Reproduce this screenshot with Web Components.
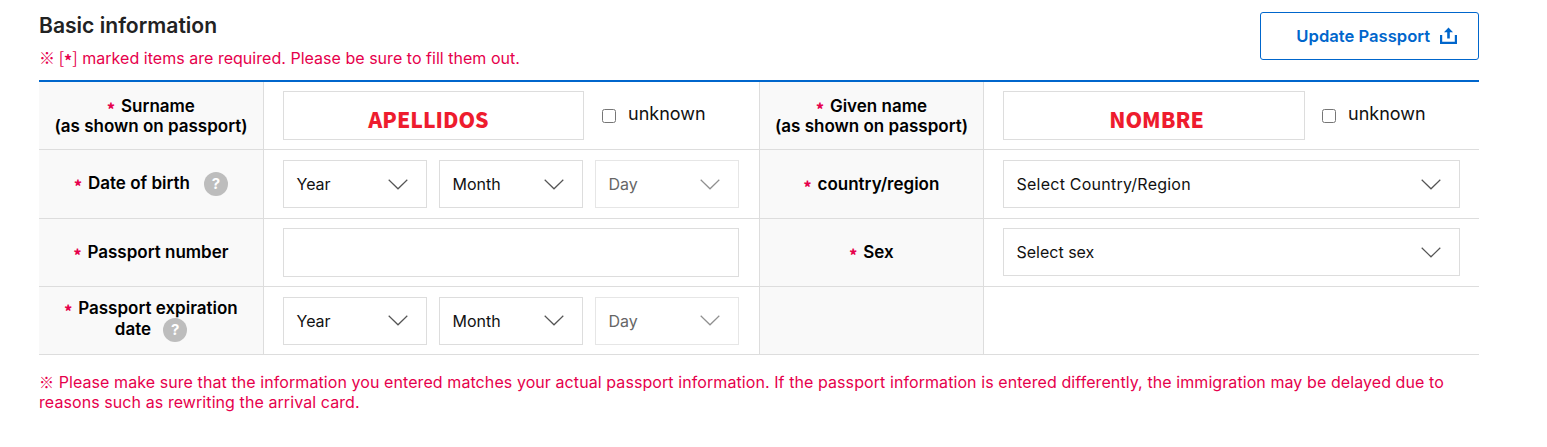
<!DOCTYPE html>
<html lang="en"><head><meta charset="utf-8"><title>Basic information</title>
<style>
html,body{margin:0;background:#fff;font-family:Inter,"Liberation Sans",sans-serif;color:#000}
.cjk{font-family:"Noto Sans CJK KR",sans-serif;line-height:0}
.star{position:relative;top:3px;font-weight:700}
</style></head><body>
<passport-form>
  <section-head slot="head" heading="Basic information">
    <span slot="note"><span class="cjk">※ [<span class="star">*</span>]</span> marked items are required. Please be sure to fill them out.</span>
    <update-button>Update Passport</update-button>
  </section-head>
  <form-grid>
    <form-label req>Surname<br>(as shown on passport)</form-label>
    <form-cell>
      <text-field width="301" mark="APELLIDOS" mark-shift="-10"></text-field>
      <check-item>unknown</check-item>
    </form-cell>
    <form-label req>Given name<br>(as shown on passport)</form-label>
    <form-cell last>
      <text-field width="302" mark="NOMBRE" mark-shift="5"></text-field>
      <check-item style="margin-left:17px">unknown</check-item>
    </form-cell>

    <form-label req>Date of birth<help-dot style="margin-left:14px"></help-dot></form-label>
    <form-cell gap="12">
      <select-box width="144">Year</select-box><select-box width="144">Month</select-box><select-box width="144" disabled>Day</select-box>
    </form-cell>
    <form-label req>country/region</form-label>
    <form-cell last><select-box width="457" style="letter-spacing:.24px">Select Country/Region</select-box></form-cell>

    <form-label req style="padding-bottom:2px">Passport number</form-label>
    <form-cell><text-field width="456"></text-field></form-cell>
    <form-label req style="padding-bottom:2px">Sex</form-label>
    <form-cell last style="padding-bottom:1px"><select-box width="457">Select sex</select-box></form-cell>

    <form-label req style="padding-bottom:2px">Passport expiration<br>date<help-dot style="margin-left:12px"></help-dot></form-label>
    <form-cell gap="12">
      <select-box width="144">Year</select-box><select-box width="144">Month</select-box><select-box width="144" disabled>Day</select-box>
    </form-cell>
    <form-label></form-label>
    <form-cell last></form-cell>
  </form-grid>
  <notice-text><span class="cjk" style="font-size:15px">※</span> Please make sure that the information you entered matches your actual passport information. If the passport information is entered differently, the immigration may be delayed due to<br>reasons such as rewriting the arrival card.</notice-text>
</passport-form>
<script>
function def(name, css, html, init){
  customElements.define(name, class extends HTMLElement{
    constructor(){super();const r=this.attachShadow({mode:'open'});r.innerHTML='<style>'+css+'</style>'+(typeof html==='function'?html(this):html);}
    connectedCallback(){ if(init) init(this,this.shadowRoot); }
  });
}
def('passport-form',
 ':host{display:block;box-sizing:border-box;width:1440px;margin-left:39px}',
 '<slot name="head"></slot><slot></slot>');

def('section-head',
 `:host{display:flex;justify-content:space-between;align-items:flex-start;height:80px;box-sizing:border-box;padding-top:12px}
  h2{margin:1px 0 0;font:600 21.1px/25px Inter,sans-serif;color:#222}
  p{margin:9px 0 0;font:400 16px/22px Inter,sans-serif;color:#e6004c;letter-spacing:.03px}
  .t{min-width:0}`,
 `<div class="t"><h2></h2><p><slot name="note"></slot></p></div><slot></slot>`,
 (h,r)=>{r.querySelector('h2').textContent=h.getAttribute('heading');});

def('update-button',
 `:host{display:flex;box-sizing:border-box;width:219px;height:48px;border:1px solid #0066cc;border-radius:3px;align-items:center;justify-content:flex-end;padding:0 21px 0 0;gap:9px;color:#0066cc;font:600 16.6px/20px Inter,sans-serif;cursor:pointer}
  svg{display:block;margin-top:-2px}`,
 `<slot></slot><svg width="18" height="17" viewBox="0 0 18 17" fill="none"><path d="M9.5.5 5 5.2h3.2v6.3h2.6V5.2H14z" fill="#0066cc"/><path d="M2.1 8v7.9h14.8V8" stroke="#0066cc" stroke-width="2.2" fill="none"/></svg>`);

def('form-grid',
 `:host{display:grid;grid-template-columns:225px 496px 224px 495px;grid-template-rows:68px 69px 68px 68px;border-top:2px solid #0066cc}`,
 '<slot></slot>');

def('form-label',
 `:host{display:block;box-sizing:border-box;background:#f9f9f9;border-right:1px solid #ddd;border-bottom:1px solid #ddd;font:600 17px/20px Inter,sans-serif;color:#000;text-align:center}
  .w{height:100%;display:flex;align-items:center;justify-content:center;padding:0 2px;box-sizing:border-box}
  .i{display:block}
  .s{color:#e6004c;font:900 15px/0 "Noto Sans CJK KR",sans-serif;margin-right:6px;position:relative;top:3px}`,
 h=>`<div class="w"><div class="i">${h.hasAttribute('req')?'<span class="s">*</span>':''}<slot></slot></div></div>`);

def('form-cell',
 `:host{display:flex;box-sizing:border-box;align-items:center;padding:0 0 0 19px;border-right:1px solid #ddd;border-bottom:1px solid #ddd}
  :host([last]){border-right:0}
  :host([gap]){gap:12px}`,
 '<slot></slot>');

def('text-field',
 `:host{display:flex;box-sizing:border-box;height:49px;border:1px solid #ddd;background:#fff;align-items:center;justify-content:center;flex:none}
  span{font:900 21.2px/1 "Noto Sans CJK KR",sans-serif;color:#ee1c2e;position:relative;top:3px}`,
 h=>{const m=h.getAttribute('mark');return m?`<span>${m}</span>`:'';},
 (h,r)=>{h.style.width=h.getAttribute('width')+'px';const s=r.querySelector('span');if(s)s.style.left=(+h.getAttribute('mark-shift')/2)+'px';});

def('check-item',
 `:host{display:flex;align-items:center;margin-left:18px;font:400 18px/22px Inter,sans-serif;color:#111}
  i{display:block;box-sizing:border-box;width:14px;height:14px;border:1px solid #767676;border-radius:2.5px;background:#fff;margin:0 12px 0 0}
  .l{position:relative;top:-2px}`,
 `<i></i><span class="l"><slot></slot></span>`);

def('select-box',
 `:host{display:flex;box-sizing:border-box;height:48px;border:1px solid #ddd;background:#fff;align-items:center;justify-content:space-between;padding:0 18px 0 12.5px;flex:none;font:400 16px/20px Inter,sans-serif;color:#111}
  :host([disabled]){color:#666;border-color:#e6e6e6}
  svg{display:block}
  :host([disabled]) svg{opacity:.65}`,
 `<slot></slot><svg width="20" height="11" viewBox="0 0 20 11" fill="none"><path d="M.7.8 10 9.8 19.3.8" stroke="#555" stroke-width="1.2"/></svg>`,
 h=>{h.style.width=h.getAttribute('width')+'px';});

def('help-dot',
 `:host{display:inline-flex;width:24px;height:24px;border-radius:50%;background:#bdbdbd;color:#fff;font:700 15px/24px Inter,sans-serif;align-items:center;justify-content:center;vertical-align:middle;margin-left:13px}`,
 '?');

def('notice-text',
 `:host{display:block;margin-top:17px;font:400 16px/20px Inter,sans-serif;color:#e6004c;letter-spacing:.08px}`,
 '<slot></slot>');
</script>
</body></html>
